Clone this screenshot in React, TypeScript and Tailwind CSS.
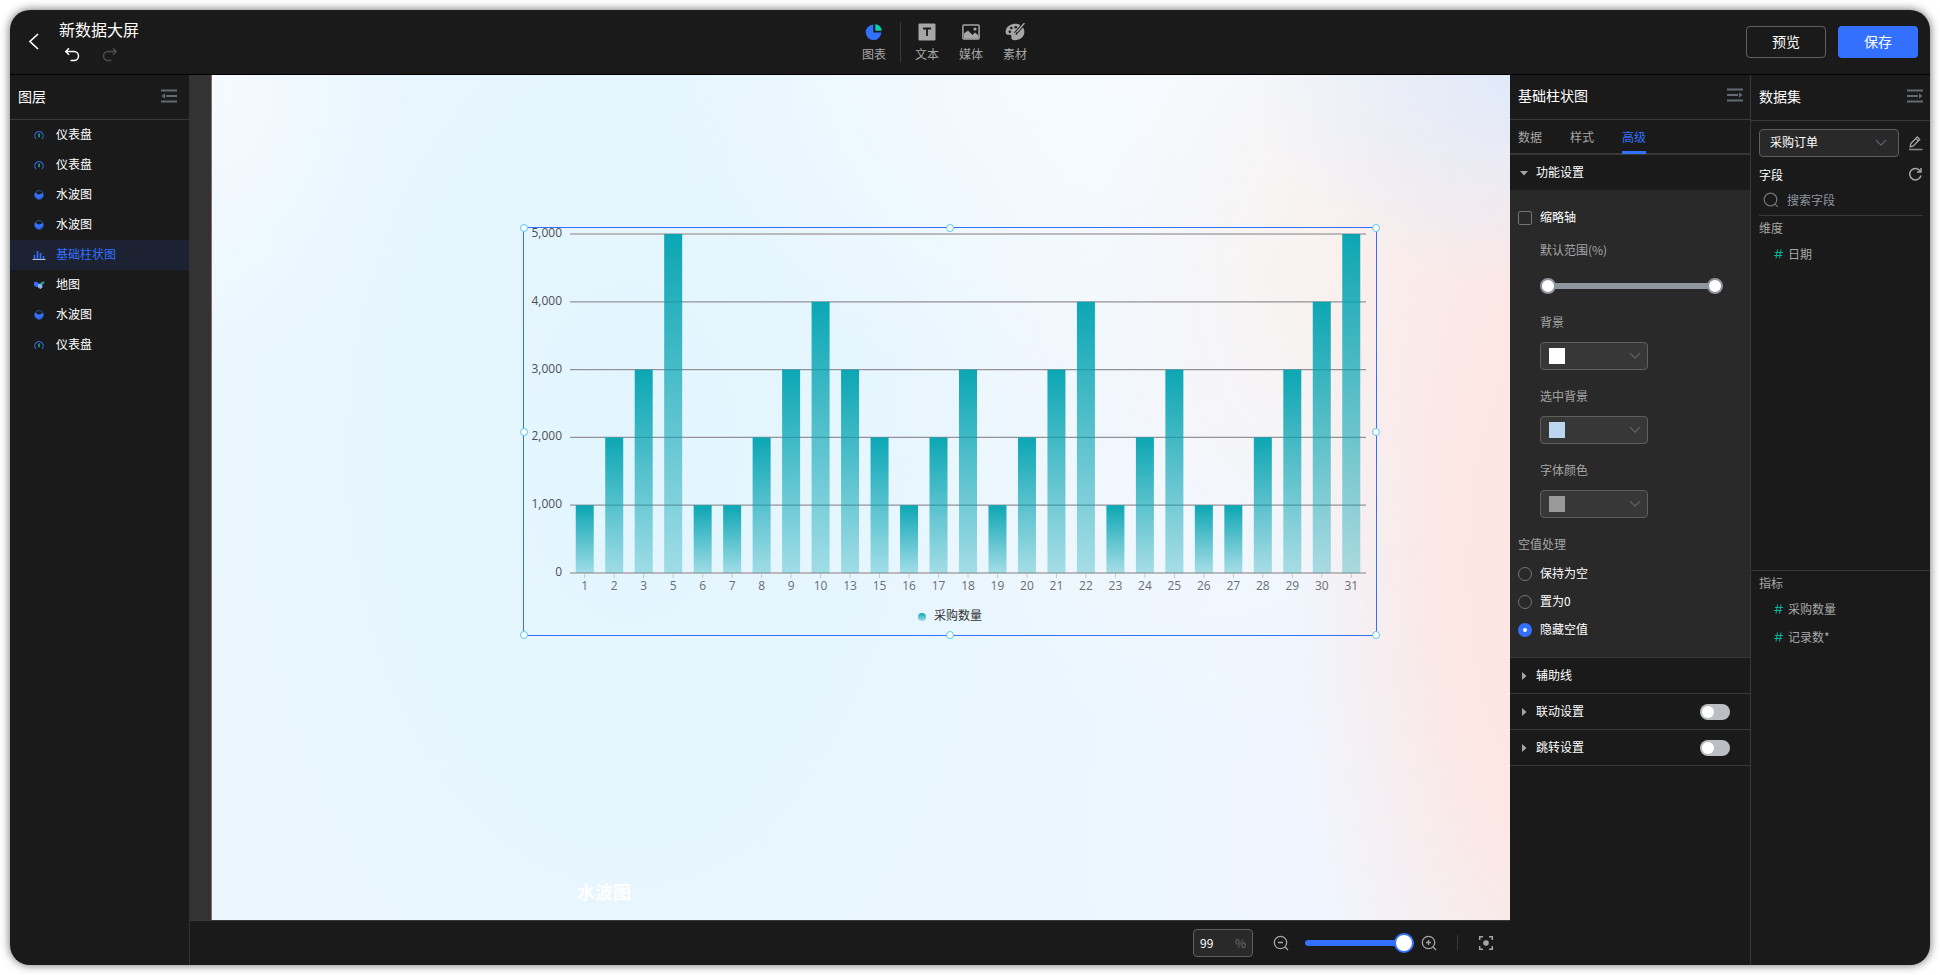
import React, { useState } from "react";

type LayerType = "gauge" | "liquid" | "bar" | "map";

const layers: { name: string; type: LayerType; active?: boolean }[] = [
  { name: "仪表盘", type: "gauge" },
  { name: "仪表盘", type: "gauge" },
  { name: "水波图", type: "liquid" },
  { name: "水波图", type: "liquid" },
  { name: "基础柱状图", type: "bar", active: true },
  { name: "地图", type: "map" },
  { name: "水波图", type: "liquid" },
  { name: "仪表盘", type: "gauge" },
];

const chartData: [string, number][] = [
  ["1", 1000], ["2", 2000], ["3", 3000], ["5", 5000], ["6", 1000], ["7", 1000],
  ["8", 2000], ["9", 3000], ["10", 4000], ["13", 3000], ["15", 2000], ["16", 1000],
  ["17", 2000], ["18", 3000], ["19", 1000], ["20", 2000], ["21", 3000], ["22", 4000],
  ["23", 1000], ["24", 2000], ["25", 3000], ["26", 1000], ["27", 1000], ["28", 2000],
  ["29", 3000], ["30", 4000], ["31", 5000],
];

/* ---------- icons ---------- */

const LayerIcon = ({ type }: { type: LayerType }) => {
  if (type === "gauge") {
    return (
      <svg width="14" height="14" viewBox="0 0 14 14" fill="none">
        <path d="M4 10.8A4.2 4.2 0 1 1 10 10.8" stroke="#2f66e0" strokeWidth="1.2" />
        <path d="M7 5.6v3.6" stroke="#14a37f" strokeWidth="1.7" />
      </svg>
    );
  }
  if (type === "liquid") {
    return (
      <svg width="14" height="14" viewBox="0 0 14 14" fill="none">
        <circle cx="7" cy="7" r="4.4" stroke="#2a4f9e" strokeWidth="1" />
        <path d="M3.4 4.8c1.2 0 1.8 1.6 3.4 1.6s2.600-1 3.800-1.400A4.100 4.100 0 1 1 3.400 4.800z" fill="#3370ff" />
      </svg>
    );
  }
  if (type === "bar") {
    return (
      <svg width="14" height="14" viewBox="0 0 14 14" fill="none">
        <path d="M2.5 7v4M5.5 3v8M8.5 5v6M11.5 8v3" stroke="#3370ff" strokeWidth="1.6" />
        <path d="M0.5 11.5h13" stroke="#b9c3d6" strokeWidth="1" />
      </svg>
    );
  }
  return (
    <svg width="14" height="14" viewBox="0 0 14 14">
      <path d="M2 4.500l2-1 2.500 1.500v4L4 9 2 7.500z" fill="#3370ff" />
      <path d="M6 6l4-.5.500 4-2 1.500L6 9.500z" fill="#8fb0e8" />
      <path d="M8 5l4-2 .3 2.200-2.300 1.800z" fill="#12a98a" />
    </svg>
  );
};

const CollapseIcon = ({ direction }: { direction: "left" | "right" }) => (
  <svg width="16" height="14" viewBox="0 0 16 14" fill="#646a73">
    <rect x="0" y="0.5" width="16" height="2" />
    <rect x="0" y="11.5" width="16" height="2" />
    {direction === "left" ? (
      <>
        <rect x="5" y="6" width="11" height="2" />
        <path d="M4 4.2v5.6L0.5 7z" />
      </>
    ) : (
      <>
        <rect x="0" y="6" width="11" height="2" />
        <path d="M12 4.2v5.6L15.5 7z" />
      </>
    )}
  </svg>
);

const ChevronDown = () => (
  <svg width="12" height="8" viewBox="0 0 12 8" fill="none" stroke="#5f6570" strokeWidth="1.2">
    <path d="M1 1.200l5 5 5-5" />
  </svg>
);

const ZoomIcon = ({ plus }: { plus?: boolean }) => (
  <svg width="16" height="16" viewBox="0 0 16 16" fill="none" stroke="#a6a6a6" strokeWidth="1.3">
    <circle cx="7.5" cy="7.5" r="6.2" />
    <path d="M12 12l3 3M5 7.500h5" />
    {plus && <path d="M7.5 5v5" />}
  </svg>
);

/* ---------- header ---------- */

const ToolItem = ({ label, children }: { label: string; children: React.ReactNode }) => (
  <button type="button" className="flex flex-col items-center gap-1 text-xs text-[#a6a6a6]">
    <span className="flex h-5 items-center">{children}</span>
    <span>{label}</span>
  </button>
);

const Header = () => (
  <header className="flex h-[65px] shrink-0 items-center justify-between border-b border-black pr-3 pl-4">
    <div className="flex items-center gap-5 pr-1 pb-[2px]">
      <button type="button" aria-label="返回" className="flex w-[13px] justify-end">
        <svg width="12" height="18" viewBox="0 0 12 18" fill="none" stroke="#fff" strokeWidth="1.7">
          <path d="M11 2L3 9.500l8 7.500" />
        </svg>
      </button>
      <div className="flex flex-col gap-2">
        <h1 className="text-base leading-5">新数据大屏</h1>
        <div className="flex gap-[22px] pl-[5px]">
          <button type="button" aria-label="撤销">
            <svg width="16" height="16" viewBox="0 0 16 16" fill="none" stroke="#fff" strokeWidth="1.5">
              <path d="M5 1.200L1.800 4.500 5 7.800M2 4.500h8a4.500 4.500 0 0 1 0 9H6.500" />
            </svg>
          </button>
          <button type="button" aria-label="重做">
            <svg width="16" height="16" viewBox="0 0 16 16" fill="none" stroke="#4d4d4d" strokeWidth="1.5">
              <path d="M11 1.200l3.200 3.300L11 7.800M14 4.500H6a4.500 4.500 0 0 0 0 9h3.500" />
            </svg>
          </button>
        </div>
      </div>
    </div>

    <nav className="flex items-center">
      <ToolItem label="图表">
        <svg width="18" height="18" viewBox="0 0 18 18">
          <path d="M8.300 1.500v8h8A7.800 7.800 0 1 1 8.300 1.500z" fill="#3370ff" />
          <path d="M10.300 1.200a7 7 0 0 1 6.500 6.500h-6.500z" fill="#04d1b4" />
        </svg>
      </ToolItem>
      <span className="mx-[14px] h-10 w-px bg-[#383838]" />
      <div className="flex gap-5">
        <ToolItem label="文本">
          <svg width="18" height="18" viewBox="0 0 18 18">
            <rect x="0.5" y="0.5" width="17" height="17" rx="1" fill="#a6a6a6" />
            <path d="M5 5.500h8M9 5.500v7.500" stroke="#1a1a1a" strokeWidth="1.8" />
          </svg>
        </ToolItem>
        <ToolItem label="媒体">
          <svg width="18" height="18" viewBox="0 0 18 18">
            <rect x="0.9" y="1.9" width="16.2" height="14.2" rx="1" fill="none" stroke="#a6a6a6" strokeWidth="1.5" />
            <path d="M2 10.500l4-3 4.500 4.500 2.500-2.500 3.500 3v3H2z" fill="#a6a6a6" />
            <circle cx="13" cy="6" r="1.6" fill="#a6a6a6" />
          </svg>
        </ToolItem>
        <ToolItem label="素材">
          <svg width="20" height="18" viewBox="0 0 20 18">
            <path
              d="M10 .8C4.800.8.600 4.500.600 8.900c0 2.500 1.900 3.400 3.700 2.900 1.600-.4 2.300.6 2 2.100-.4 1.800 1 3.300 3.700 3.300 5.200 0 9.400-3.500 9.400-8.200S15.200.8 10 .8z"
              fill="#a6a6a6"
            />
            <circle cx="4.8" cy="8.8" r="1.3" fill="#1a1a1a" />
            <circle cx="6.3" cy="5" r="1.3" fill="#1a1a1a" />
            <circle cx="10.8" cy="4.2" r="1.3" fill="#1a1a1a" />
            <path d="M19.500 0L10 11" stroke="#1a1a1a" strokeWidth="3.4" />
            <path d="M19.500 0l-8 9.300M11 9.500l-2.200 2.300" stroke="#a6a6a6" strokeWidth="1.5" />
          </svg>
        </ToolItem>
      </div>
    </nav>

    <div className="flex gap-3 text-sm">
      <button type="button" className="h-8 w-20 rounded border border-[#5f5f5f] pb-[2px]">
        预览
      </button>
      <button type="button" className="h-8 w-20 rounded bg-[#3370ff] pb-[2px]">
        保存
      </button>
    </div>
  </header>
);

/* ---------- layer list ---------- */

const LayerPanel = () => (
  <aside className="w-[180px] shrink-0 border-r border-[#333]">
    <div className="flex h-[45px] items-center justify-between border-b border-[#383838] pr-3 pb-[2px] pl-2">
      <h2 className="text-sm">图层</h2>
      <button type="button" aria-label="收起图层">
        <CollapseIcon direction="left" />
      </button>
    </div>
    <ul>
      {layers.map((layer, i) => (
        <li
          key={i}
          className={
            layer.active
              ? "flex h-[30px] items-center gap-[10px] bg-[#1c2232] pl-[22px] text-[#3370ff]"
              : "flex h-[30px] items-center gap-[10px] pl-[22px]"
          }
        >
          <LayerIcon type={layer.type} />
          <span className="pb-[2px]">{layer.name}</span>
        </li>
      ))}
    </ul>
  </aside>
);

/* ---------- bar chart ---------- */

const plot = { left: 47, right: 843, top: 7, bottom: 346 };
const maxValue = 5000;

const BarChart = () => {
  const step = (plot.right - plot.left) / chartData.length;
  const y = (v: number) => plot.bottom - (v / maxValue) * (plot.bottom - plot.top);

  return (
    <svg
      width="854"
      height="409"
      viewBox="0 0 854 409"
      className="block overflow-visible font-['Open_Sans','Noto_Sans_CJK_SC',sans-serif] text-xs"
    >
      <defs>
        <linearGradient id="barFill" x1="0" y1="0" x2="0" y2="1">
          <stop offset="0" stopColor="#00a2b0" stopOpacity="0.95" />
          <stop offset="1" stopColor="#00a2b0" stopOpacity="0.3" />
        </linearGradient>
      </defs>
      {[0, 1000, 2000, 3000, 4000, 5000].map((v) => (
        <g key={v}>
          <line
            x1={plot.left}
            x2={plot.right}
            y1={y(v)}
            y2={y(v)}
            stroke={v === 0 || v === maxValue ? "#bcb9bd" : "#949297"}
            strokeWidth={v === 0 || v === maxValue ? 2 : 1.3}
          />
          <text x="39" y={y(v) + 3} textAnchor="end" fill="#4d4f55">
            {v.toLocaleString("en-US")}
          </text>
        </g>
      ))}
      {chartData.map(([day, value], i) => {
        const cx = plot.left + step * (i + 0.5);
        return (
          <g key={day}>
            <rect x={cx - 9} y={y(value)} width="18" height={plot.bottom - y(value)} fill="url(#barFill)" />
            <line x1={cx} x2={cx} y1={plot.bottom + 1} y2={plot.bottom + 5} stroke="#c2c6cc" />
            <text x={cx} y="363" textAnchor="middle" fill="#6b6e74">
              {day}
            </text>
          </g>
        );
      })}
      <circle cx="399" cy="390" r="4" fill="url(#barFill)" />
      <text x="411" y="393" fill="#333">
        采购数量
      </text>
    </svg>
  );
};

const handles = [
  "top-0 left-0",
  "top-0 left-1/2",
  "top-0 left-full",
  "top-1/2 left-0",
  "top-1/2 left-full",
  "top-full left-0",
  "top-full left-1/2",
  "top-full left-full",
];

const Canvas = () => (
  <div className="flex min-h-0 flex-1 border-b border-[#383838]">
    <div className="w-[22px] shrink-0 border-r border-[#8a6a64] bg-[#333]" />
    <div className="relative flex-1 overflow-hidden bg-[#ebf7ff] bg-[radial-gradient(ellipse_20%_25%_at_100%_0%,#e1eafa_0%,#e1eafa00_100%),radial-gradient(ellipse_20%_85%_at_103%_58%,#fde5e3_0%,#fce7e5_40%,#fce7e500_100%),radial-gradient(ellipse_20%_40%_at_88%_22%,#faf1ee_0%,#faf1ee00_100%),radial-gradient(ellipse_35%_40%_at_70%_0%,#f7fbff_0%,#f7fbff00_100%),radial-gradient(ellipse_20%_50%_at_86%_90%,#f1f6ff_0%,#f1f6ff00_100%),radial-gradient(ellipse_25%_40%_at_77%_40%,#f4f7fd_0%,#f4f7fd00_100%),radial-gradient(ellipse_15%_35%_at_0%_0%,#f5faff_0%,#f5faff00_100%),radial-gradient(ellipse_38%_90%_at_32%_45%,#e2f5fe_0%,#e2f5fe00_100%)]">
      <div className="absolute top-[152px] left-[311px]">
        <BarChart />
        <div className="absolute inset-0 border border-[#3370ff]">
          {handles.map((pos) => (
            <span
              key={pos}
              className={`absolute size-2 -translate-1/2 rounded-full border border-[#59c7f9] bg-white ${pos}`}
            />
          ))}
        </div>
      </div>
      <span className="absolute top-[802px] left-[365px] text-lg font-bold text-white">水波图</span>
    </div>
  </div>
);

const ZoomBar = () => {
  const [zoom, setZoom] = useState(99);

  return (
    <footer className="flex h-[44px] shrink-0 items-center justify-end pr-4">
      <label className="flex h-7 w-[60px] items-center justify-between rounded border border-[#5f5f5f] bg-[#292929] px-[6px]">
        <input
          type="text"
          aria-label="缩放比例"
          value={zoom}
          onChange={(e) => setZoom(Number(e.target.value) || 0)}
          className="w-6 bg-transparent outline-none"
        />
        <span className="text-[#646a73]">%</span>
      </label>
      <button type="button" aria-label="缩小" className="ml-5">
        <ZoomIcon />
      </button>
      <input
        type="range"
        aria-label="缩放"
        min={0}
        max={99}
        value={zoom}
        onChange={(e) => setZoom(Number(e.target.value))}
        className="ml-4 h-[6px] w-[109px] appearance-none rounded-full bg-[#3370ff] [&::-webkit-slider-thumb]:size-5 [&::-webkit-slider-thumb]:appearance-none [&::-webkit-slider-thumb]:rounded-full [&::-webkit-slider-thumb]:border-2 [&::-webkit-slider-thumb]:border-[#3370ff] [&::-webkit-slider-thumb]:bg-white"
      />
      <button type="button" aria-label="放大" className="ml-[7px]">
        <ZoomIcon plus />
      </button>
      <span className="mx-5 h-4 w-px bg-[#383838]" />
      <button type="button" aria-label="适应画布">
        <svg width="16" height="16" viewBox="0 0 16 16" fill="none" stroke="#a6a6a6" strokeWidth="1.5">
          <path d="M1.700 5V1.700H5M11 1.700h3.300V5M14.300 11v3.300H11M5 14.300H1.700V11" />
          <circle cx="8" cy="8" r="2.8" fill="#a6a6a6" stroke="none" />
        </svg>
      </button>
    </footer>
  );
};

/* ---------- chart settings ---------- */

const rangeClass =
  "pointer-events-none absolute inset-0 h-4 w-full appearance-none bg-transparent [&::-webkit-slider-thumb]:pointer-events-auto [&::-webkit-slider-thumb]:size-4 [&::-webkit-slider-thumb]:appearance-none [&::-webkit-slider-thumb]:rounded-full [&::-webkit-slider-thumb]:border-2 [&::-webkit-slider-thumb]:border-[#8f959e] [&::-webkit-slider-thumb]:bg-white";

const ColorField = ({ label, color }: { label: string; color: string }) => (
  <div className="mb-[17px] ml-[22px]">
    <div className="pb-[2px] leading-[18px] text-[#a6a6a6]">{label}</div>
    <button
      type="button"
      aria-label={label}
      className="mt-[9px] flex h-7 w-[108px] items-center justify-between rounded border border-[#5f5f5f] bg-[#373737] pr-[6px] pl-2"
    >
      <span className="size-4" style={{ backgroundColor: color }} />
      <ChevronDown />
    </button>
  </div>
);

const SectionTitle = ({ title, open, toggle }: { title: string; open?: boolean; toggle?: boolean }) => (
  <div className={`flex h-[36px] items-center border-b pr-5 pl-[10px] ${open ? "border-[#292929]" : "border-[#383838]"}`}>
    <button type="button" className="flex flex-1 items-center gap-2">
      <svg width="8" height="8" viewBox="0 0 8 8" fill="#a6a6a6">
        {open ? <path d="M0 2h8L4 6.500z" /> : <path d="M2 0l4.500 4L2 8z" />}
      </svg>
      <span className="pb-[2px]">{title}</span>
    </button>
    {toggle && (
      <input
        type="checkbox"
        role="switch"
        aria-label={title}
        className="h-4 w-[30px] appearance-none rounded-full bg-[#bbbfc4] p-[2px] before:block before:size-3 before:rounded-full before:bg-white checked:bg-[#3370ff] checked:before:ml-[14px]"
      />
    )}
  </div>
);

const SettingsPanel = () => {
  const [emptyMode, setEmptyMode] = useState("隐藏空值");
  const [range, setRange] = useState([0, 100]);

  return (
    <aside className="w-60 shrink-0">
      <div className="flex h-[45px] items-center justify-between border-b border-[#383838] pr-[7px] pb-1 pl-2">
        <h2 className="text-sm">基础柱状图</h2>
        <button type="button" aria-label="收起属性">
          <CollapseIcon direction="right" />
        </button>
      </div>
      <div role="tablist" className="flex h-[35px] gap-7 border-b-2 border-[#383838] px-2">
        {["数据", "样式", "高级"].map((tab) => (
          <button
            key={tab}
            type="button"
            role="tab"
            aria-selected={tab === "高级"}
            className={
              tab === "高级"
                ? "h-[34px] border-b-3 border-[#3370ff] pt-[2px] text-[#3370ff]"
                : "h-[34px] border-b-3 border-transparent pt-[2px] text-[#a6a6a6]"
            }
          >
            {tab}
          </button>
        ))}
      </div>

      <SectionTitle title="功能设置" open />
      <div className="border-b border-[#383838] bg-[#292929] px-2 pt-[17px] pb-[13px]">
        <label className="flex h-5 items-center gap-2">
          <input
            type="checkbox"
            className="size-[14px] appearance-none rounded-xs border border-[#757575] checked:bg-[#3370ff]"
          />
          <span className="pb-[2px]">缩略轴</span>
        </label>
        <div className="mt-[13px] ml-[22px] pb-[2px] leading-[18px] text-[#a6a6a6]">默认范围(%)</div>
        <div className="relative mt-[17px] mr-[19px] mb-[19px] ml-[22px] flex h-4 items-center">
          <div className="mx-1 h-[6px] flex-1 bg-[#8f959e]" />
          <input
            type="range"
            aria-label="范围起点"
            value={range[0]}
            onChange={(e) => setRange([Number(e.target.value), range[1]])}
            className={rangeClass}
          />
          <input
            type="range"
            aria-label="范围终点"
            value={range[1]}
            onChange={(e) => setRange([range[0], Number(e.target.value)])}
            className={rangeClass}
          />
        </div>
        <ColorField label="背景" color="#ffffff" />
        <ColorField label="选中背景" color="#bcd5f1" />
        <ColorField label="字体颜色" color="#999999" />
        <fieldset>
          <legend className="mb-[5px] pb-[2px] leading-[18px] text-[#a6a6a6]">空值处理</legend>
          {["保持为空", "置为0", "隐藏空值"].map((mode) => (
            <label key={mode} className="flex h-7 items-center gap-2">
              <input
                type="radio"
                name="emptyMode"
                checked={emptyMode === mode}
                onChange={() => setEmptyMode(mode)}
                className="size-[14px] appearance-none rounded-full border border-[#757575] checked:border-5 checked:border-[#3370ff] checked:bg-white"
              />
              <span className="pb-[2px]">{mode}</span>
            </label>
          ))}
        </fieldset>
      </div>
      <SectionTitle title="辅助线" />
      <SectionTitle title="联动设置" toggle />
      <SectionTitle title="跳转设置" toggle />
    </aside>
  );
};

/* ---------- dataset ---------- */

const FieldGroup = ({ title, fields }: { title: string; fields: string[] }) => (
  <>
    <h3 className="leading-6 text-[#a6a6a6]">{title}</h3>
    <ul className="text-[#a6a6a6]">
      {fields.map((field) => (
        <li key={field} className="flex h-7 items-center gap-[5px] pl-[15px]">
          <svg width="9" height="10" viewBox="0 0 9 10" fill="none" stroke="#04b49c" strokeWidth="1">
            <path d="M3.500 0.500l-1.500 9M7 0.500l-1.500 9M1 3.500h8M0 6.500h8" />
          </svg>
          {field}
        </li>
      ))}
    </ul>
  </>
);

const DatasetPanel = () => (
  <aside className="flex w-[180px] shrink-0 flex-col border-l border-[#383838]">
    <div className="flex h-[46px] shrink-0 items-center justify-between border-b border-[#383838] pr-[7px] pb-1 pl-2">
      <h2 className="text-sm">数据集</h2>
      <button type="button" aria-label="收起数据集">
        <CollapseIcon direction="right" />
      </button>
    </div>
    <div className="pt-2 pr-[7px] pl-2">
      <div className="flex items-center justify-between">
        <div className="relative">
          <select
            aria-label="数据集"
            className="h-7 w-[140px] appearance-none rounded border border-[#5f5f5f] bg-[#292929] px-[10px] pb-[2px]"
          >
            <option>采购订单</option>
          </select>
          <span className="pointer-events-none absolute top-[10px] right-3">
            <ChevronDown />
          </span>
        </div>
        <button type="button" aria-label="编辑数据集">
          <svg width="15" height="16" viewBox="0 0 15 16" fill="none" stroke="#a6a6a6" strokeWidth="1.3">
            <path d="M2.200 11.800l.6-3.300L9.300 2l2.400 2.400-6.400 6.500zM7.800 3.500l2.400 2.400" />
            <path d="M1 14.500h13.500" stroke="#8a8a8a" strokeWidth="1.5" />
          </svg>
        </button>
      </div>
      <div className="mt-2 flex h-5 items-center justify-between">
        <h3>字段</h3>
        <button type="button" aria-label="刷新字段" className="pb-[2px]">
          <svg width="15" height="14" viewBox="0 0 15 14" fill="none" stroke="#a6a6a6" strokeWidth="1.5">
            <path d="M12.300 4.200A5.700 5.700 0 1 0 13 8.500" />
            <path d="M13 1v4H9" />
          </svg>
        </button>
      </div>
      <label className="flex h-[31px] items-center gap-2 border-b border-[#383838] pl-1">
        <svg width="16" height="16" viewBox="0 0 16 16" fill="none" stroke="#757575" strokeWidth="1.2">
          <circle cx="7.5" cy="7.5" r="6.3" />
          <path d="M11.800 11.800l3 3" />
        </svg>
        <input
          type="text"
          aria-label="搜索字段"
          placeholder="搜索字段"
          className="min-w-0 flex-1 bg-transparent outline-none placeholder:text-[#8f959e]"
        />
      </label>
    </div>
    <div className="flex-[9] px-2">
      <FieldGroup title="维度" fields={["日期"]} />
    </div>
    <div className="flex-[10] border-t border-[#383838] px-2">
      <FieldGroup title="指标" fields={["采购数量", "记录数*"]} />
    </div>
  </aside>
);

const App = () => {
  return (
    <div className="flex h-screen bg-white p-[10px] font-['Noto_Sans_CJK_SC',sans-serif] text-xs text-white">
      <div className="flex min-w-0 flex-1 flex-col overflow-hidden rounded-[20px] bg-[#1a1a1a] shadow-[0_0_10px_rgba(0,0,0,0.6)]">
        <Header />
        <div className="flex min-h-0 flex-1">
          <LayerPanel />
          <main className="flex min-w-0 flex-1 flex-col">
            <Canvas />
            <ZoomBar />
          </main>
          <SettingsPanel />
          <DatasetPanel />
        </div>
      </div>
    </div>
  );
};

export default App;
